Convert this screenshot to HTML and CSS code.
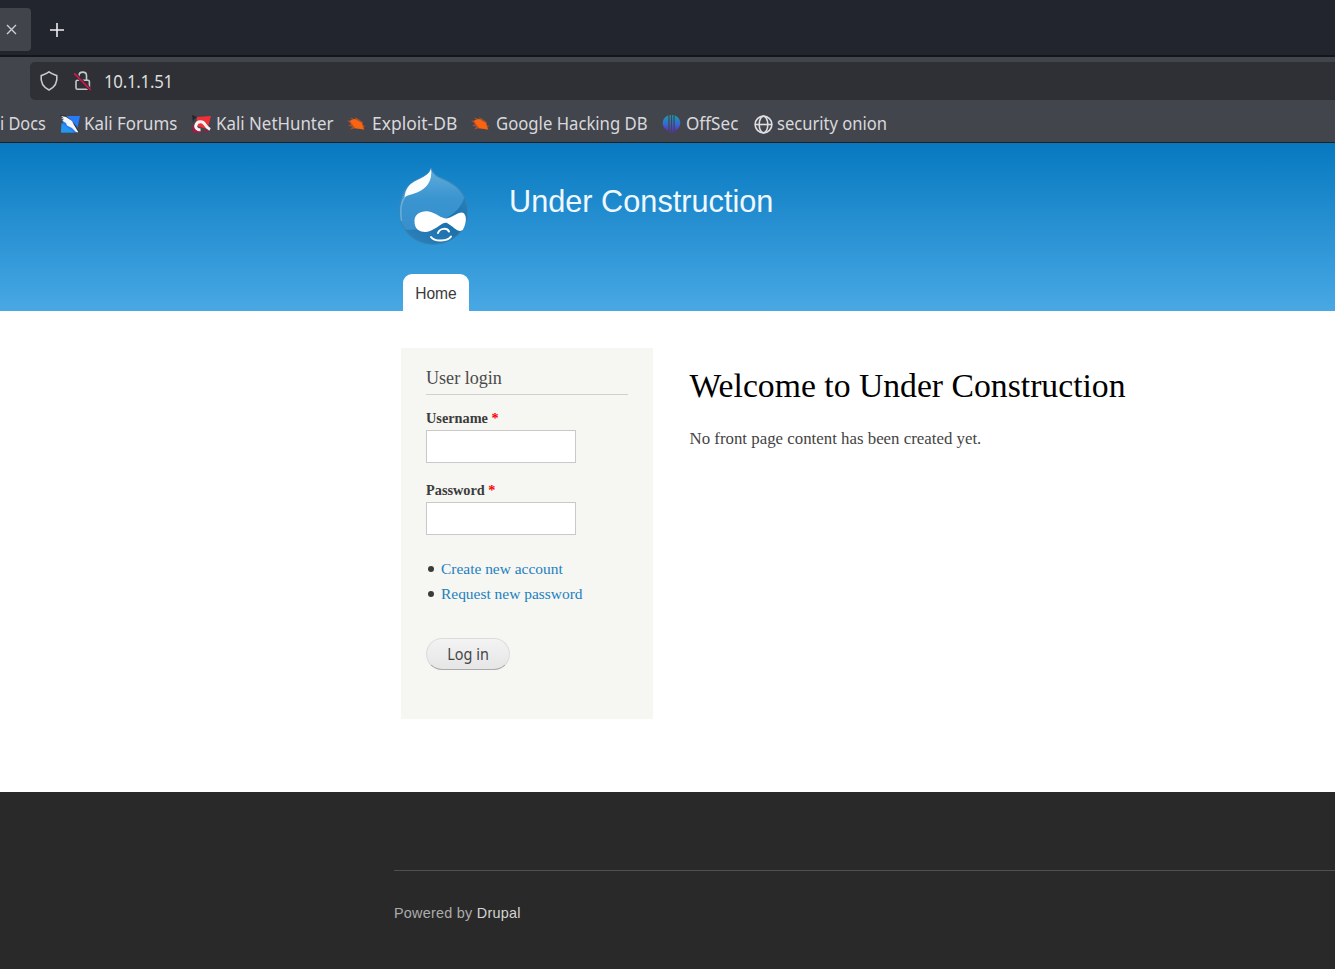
FILE: index.html
```html
<!DOCTYPE html>
<html lang="en">
<head>
<meta charset="utf-8">
<title>Welcome to Under Construction | Under Construction</title>
<link rel="stylesheet" href="styles.css">
</head>
<body>
<div class="tabs">
  <div class="tab"><svg width="13" height="13" viewBox="0 0 13 13"><path d="M2 2 11 11M11 2 2 11" stroke="#d0d1d4" stroke-width="1.3"/></svg></div>
  <svg class="plus" width="16" height="16" viewBox="0 0 16 16"><path d="M8 1V15M1 8H15" stroke="#eeeef0" stroke-width="1.6"/></svg>
</div>
<div class="toolbar">
  <div class="address">
    <svg width="20" height="22" viewBox="0 0 20 22" fill="none"><path d="M10 1.800C8.300 3.500 5 4.400 2.200 5.600C1.400 12 4 17 10 20C16 17 18.600 12 17.800 5.600C15 4.400 11.700 3.500 10 1.800Z" stroke="#c8c8ca" stroke-width="1.6" stroke-linejoin="round"/></svg>
    <svg class="lock" width="18" height="22" viewBox="0 0 18 22" fill="none"><path d="M5 10V5.600C5 .9 12.500 .9 12.500 5.600V10M3.500 10.300H13.900Q15.400 10.300 15.400 11.800V17.800Q15.400 19.300 13.900 19.300H3.500Q2 19.300 2 17.800V11.800Q2 10.300 3.500 10.300Z" stroke="#c8c8ca" stroke-width="1.6"/><path d="M.4 3.300 16.500 20" stroke="#2f3036" stroke-width="3.400"/><path d="M.2 3.300 16.700 20" stroke="#d9164a" stroke-width="1.700"/></svg>
    <span class="url">10.1.1.51</span>
  </div>
  <div class="bookmarks">
    <div class="bm docs"><span>i Docs</span></div>
    <div class="bm forums"><svg width="20" height="20" viewBox="0 0 20 20"><path d="M4 2H20L16.500 18.500H1Z" fill="#277bf8"/><path d="M1.500 9 1 18.500H14Z" fill="#2498ef"/><path d="M0 1.500 5 2 11 7 16 13 19 19" fill="none" stroke="#33343a" stroke-width="1.500"/><path d="M1 2 6 3 12 7 14 11 18.500 18.500 16 18 12 14 7 11.500 6 9 2 6.500 4 6 1 4 4 4.500Z" fill="#f5f6f7"/></svg><span>Kali Forums</span></div>
    <div class="bm nethunter"><svg width="20" height="20" viewBox="0 0 20 20"><path d="M5 3 19 2 15.500 15 4 12Z" fill="#f02f38"/><path d="M0 1 5 3 2 5.500 1 9Z" fill="#25262c"/><path d="M.8 10.500 5 13 9 18.500H1Z" fill="#ad1642"/><path d="M9 18 18 16 15 18.500Z" fill="#9e1941"/><path d="M8.500 15.800C5.500 16 2.800 13.600 4 10.800C5.500 7.300 10.500 6.500 13 10.500C14.200 12.500 15.300 14 18 15.500" fill="none" stroke="#f5f5f6" stroke-width="3"/></svg><span>Kali NetHunter</span></div>
    <div class="bm exploit"><svg width="20" height="20" viewBox="0 0 20 20"><path d="M0 6.500 6 7 3 3.500 9 5.500 8 3 12 5.500 16 8.500 15 11 18.500 12 16.500 13 17.500 15.500 12 15 7 14.500 3 15.500 5.500 12.500 1 12 4 10Z" fill="#a75032"/><path d="M3 6.500 8 5 15 9 16.800 15.500 8 14 4.500 9.500Z" fill="#f86410"/></svg><span>Exploit-DB</span></div>
    <div class="bm google"><svg width="20" height="20" viewBox="0 0 20 20"><path d="M0 6.500 6 7 3 3.500 9 5.500 8 3 12 5.500 16 8.500 15 11 18.500 12 16.500 13 17.500 15.500 12 15 7 14.500 3 15.500 5.500 12.500 1 12 4 10Z" fill="#a75032"/><path d="M3 6.500 8 5 15 9 16.800 15.500 8 14 4.500 9.500Z" fill="#f86410"/></svg><span>Google Hacking DB</span></div>
    <div class="bm offsec"><svg width="19" height="20" viewBox="0 0 19 20"><defs><linearGradient id="os" x2="0" y2="1"><stop stop-color="#159fae"/><stop offset=".5" stop-color="#356bd0"/><stop offset="1" stop-color="#6522b8"/></linearGradient></defs><path d="M6.300 1.300V17C-1.200 13.500-1.200 4.500 6.300 1.300ZM7.600 1H8.900V19H7.600ZM10.100 1H11.400V19H10.100ZM12.700 1.300C20.200 4.500 20.200 13.500 12.700 17Z" fill="url(#os)"/></svg><span>OffSec</span></div>
    <div class="bm onion"><svg width="20" height="20" viewBox="0 0 20 20" fill="none" stroke="#dedfe1" stroke-width="1.6"><circle cx="10.500" cy="10.500" r="8.400"/><ellipse cx="10.500" cy="10.500" rx="4.300" ry="8.400"/><path d="M2.100 10.500H18.900"/></svg><span>security onion</span></div>
  </div>
</div>
<header class="header">
  <div class="brand">
    <svg class="logo" width="72" height="80" viewBox="0 0 72 80">
      <defs>
        <linearGradient id="drop" x2="0" y2="1"><stop stop-color="#62aedd"/><stop offset=".4" stop-color="#3994cf"/><stop offset="1" stop-color="#378ecb"/></linearGradient>
        <linearGradient id="shade" x1="1" y1="0" x2="0" y2="1"><stop stop-color="#2b82bd"/><stop offset=".4" stop-color="#1b70ab"/><stop offset="1" stop-color="#3085c2"/></linearGradient>
        <clipPath id="dropclip"><path d="M33 .5C35 7.500 40 9.500 46 12C60 18 70 28 70 45C70 64 54 77.500 35.500 77.500C16 77.500 1.200 63 1.200 44C1.200 33 5 22 13 16C21 10 31 9 33 .5Z"/></clipPath>
      </defs>
      <g clip-path="url(#dropclip)">
        <path d="M0 0H72V80H0Z" fill="url(#drop)"/>
        <path d="M67 28C64 40 57 46 47 52C30 63 12 64 1 62L8 80H72V32Z" fill="url(#shade)"/>
        <path d="M33 .5C35 7.500 40 9.500 46 12C60 18 70 28 70 45C70 64 54 77.500 35.500 77.500C16 77.500 1.200 63 1.200 44C1.200 33 5 22 13 16C21 10 31 9 33 .5Z" fill="none" stroke="#3a83ae" stroke-width="1.600"/>
        <path d="M3.500 54C2 44 3 35 7 30" fill="none" stroke="#69afdc" stroke-width="1.500"/>
        <path d="M33 1.500C35 14 28 22 19 25.500C13 28 9 28 6.500 30.500C7 24 10 19 13.500 16.500C21 11 31 9.500 33 1.500Z" fill="#fafdff"/>
      </g>
      <path d="M16.500 54C16.500 47 23 43.500 31 44.500C38 46 43 51.500 48.500 51.500C54 50.500 59 45.500 64 45.500C69.500 46.500 68.500 56.500 65 62.500C61 67 56 60 49 56C44 54.500 37 64.500 27.500 65C20 65 16.500 61 16.500 54Z" fill="#fff"/>
      <path d="M40 66C42 61 49 60.500 51 64.500M33 70C36.500 75 50 74.500 53 69.500" fill="none" stroke="#fff" stroke-width="2" stroke-linecap="round"/>
    </svg>
    <div class="site-name">Under Construction</div>
  </div>
  <nav class="menu">Home</nav>
</header>
<main class="main">
  <form class="sidebar">
    <h2>User login</h2>
    <label for="name">Username <b>*</b></label>
    <input id="name" type="text">
    <label class="second" for="pass">Password <b>*</b></label>
    <input id="pass" type="password">
    <ul><li><a>Create new account</a></li><li><a>Request new password</a></li></ul>
    <button type="button"><span>Log in</span></button>
  </form>
  <section class="content">
    <h1>Welcome to Under Construction</h1>
    <p>No front page content has been created yet.</p>
  </section>
</main>
<footer class="footer"><div class="credits">Powered by <a>Drupal</a></div></footer>
</body>
</html>
```
FILE: styles.css
```css
* { box-sizing: border-box; }
body { margin: 0; width: 1335px; height: 969px; overflow: hidden; background: #fff; font-family: "Liberation Serif", serif; color: #3b3b3b; display: flex; flex-direction: column; }
svg { display: block; flex: none; }
.tabs { height: 57px; flex: none; background: #23252e; border-bottom: 2px solid #15161c; display: flex; align-items: flex-start; padding-top: 8px; }
.tab { width: 31px; height: 43px; background: #42444c; border-radius: 0 4px 4px 0; padding: 15px 0 0 5px; }
.plus { margin: 14px 0 0 18px; }
.toolbar { height: 86px; flex: none; background: #43454d; border-bottom: 1px solid #202127; padding-top: 5px; font-family: "Noto Sans", sans-serif; }
.address { margin-left: 30px; height: 38px; background: #2f3035; border-radius: 5px 0 0 5px; display: flex; align-items: center; padding-left: 9px; }
.lock { margin-left: 15px; }
.url { color: #dcdcdd; font-size: 18.5px; line-height: 38px; letter-spacing: -0.3px; margin-left: 12px; transform: scaleX(.91); transform-origin: left; }
.bookmarks { display: flex; height: 41px; padding-top: 4px; color: #d8d9dc; font-size: 18px; white-space: nowrap; }
.bm { display: flex; align-items: center; height: 39px; gap: 4px; flex: none; }
.bm span { padding-bottom: 1px; transform: scaleX(.938); transform-origin: left; }
.docs { width: 60px; }
.docs span { transform: scaleX(.905); }
.forums { width: 132px; }
.nethunter { width: 155px; }
.exploit { width: 124px; }
.exploit span, .google span, .offsec span { margin-left: 1px; }
.exploit span { transform: scaleX(.97); }
.google { width: 191px; }
.google span { transform: scaleX(.927); }
.offsec { width: 91px; }
.offsec span { transform: scaleX(.95); }
.onion span { transform: scaleX(.92); }
.header { height: 168px; flex: none; background: linear-gradient(#0779c0, #48a8e4); padding-left: 398px; font-family: "Liberation Sans", sans-serif; }
.brand { height: 131px; display: flex; padding-top: 24px; }
.site-name { margin-left: 39px; color: #f0f8ff; font-size: 30.7px; line-height: 70px; }
.menu { width: 66px; height: 37px; margin-left: 5px; background: #fff; border-radius: 9px 9px 0 0; font-size: 15.6px; line-height: 40px; text-align: center; color: #3b3b3b; }
.main { height: 481px; flex: none; display: flex; align-items: flex-start; padding: 37px 0 0 401px; }
.sidebar { width: 252px; height: 371px; padding: 19px 25px 0; background: #f6f6f2; }
h2 { margin: 0 0 13px; height: 28px; border-bottom: 1px solid #d0d0d0; font-size: 18.1px; font-weight: normal; line-height: 22px; color: #4a4a4a; }
label { display: block; font-size: 14.3px; font-weight: bold; line-height: 20px; height: 22px; }
label b { color: red; }
.second { margin-top: 17px; }
input { display: block; width: 150px; height: 33px; border: 1px solid #c9c9c9; background: #fff; }
ul { margin: 21px 0 0; padding: 0; font-size: 15.45px; line-height: 25px; list-style: none; }
li { display: flex; align-items: center; gap: 7px; padding-left: 2px; }
li::before { content: ""; width: 6px; height: 6px; border-radius: 50%; background: #3b3b3b; }
a { color: #1b80c0; }
button { display: block; width: 84px; height: 32px; margin-top: 32px; padding: 0 0 1px; border: 1px solid #dcdcdc; border-bottom-color: #aaa; border-radius: 16px; background: linear-gradient(#f3f3f3, #e6e6e6); font: 16px "Noto Sans", sans-serif; color: #444; }
button span { display: inline-block; transform: scaleX(.9); }
.content { margin-left: 36.5px; padding-top: 17.5px; }
h1 { margin: 0; color: #000; font-weight: normal; font-size: 33.7px; line-height: 40px; }
p { margin: 23px 0 0; font-size: 16.85px; line-height: 20px; color: #444; }
.footer { height: 177px; flex: none; background: #292929; padding: 78px 0 0 394px; font-family: "Liberation Sans", sans-serif; }
.credits { border-top: 1px solid #505050; padding-top: 32px; font-size: 14.4px; letter-spacing: .25px; line-height: 20px; color: #acacac; }
.credits a { color: #d4d4d4; }
```
